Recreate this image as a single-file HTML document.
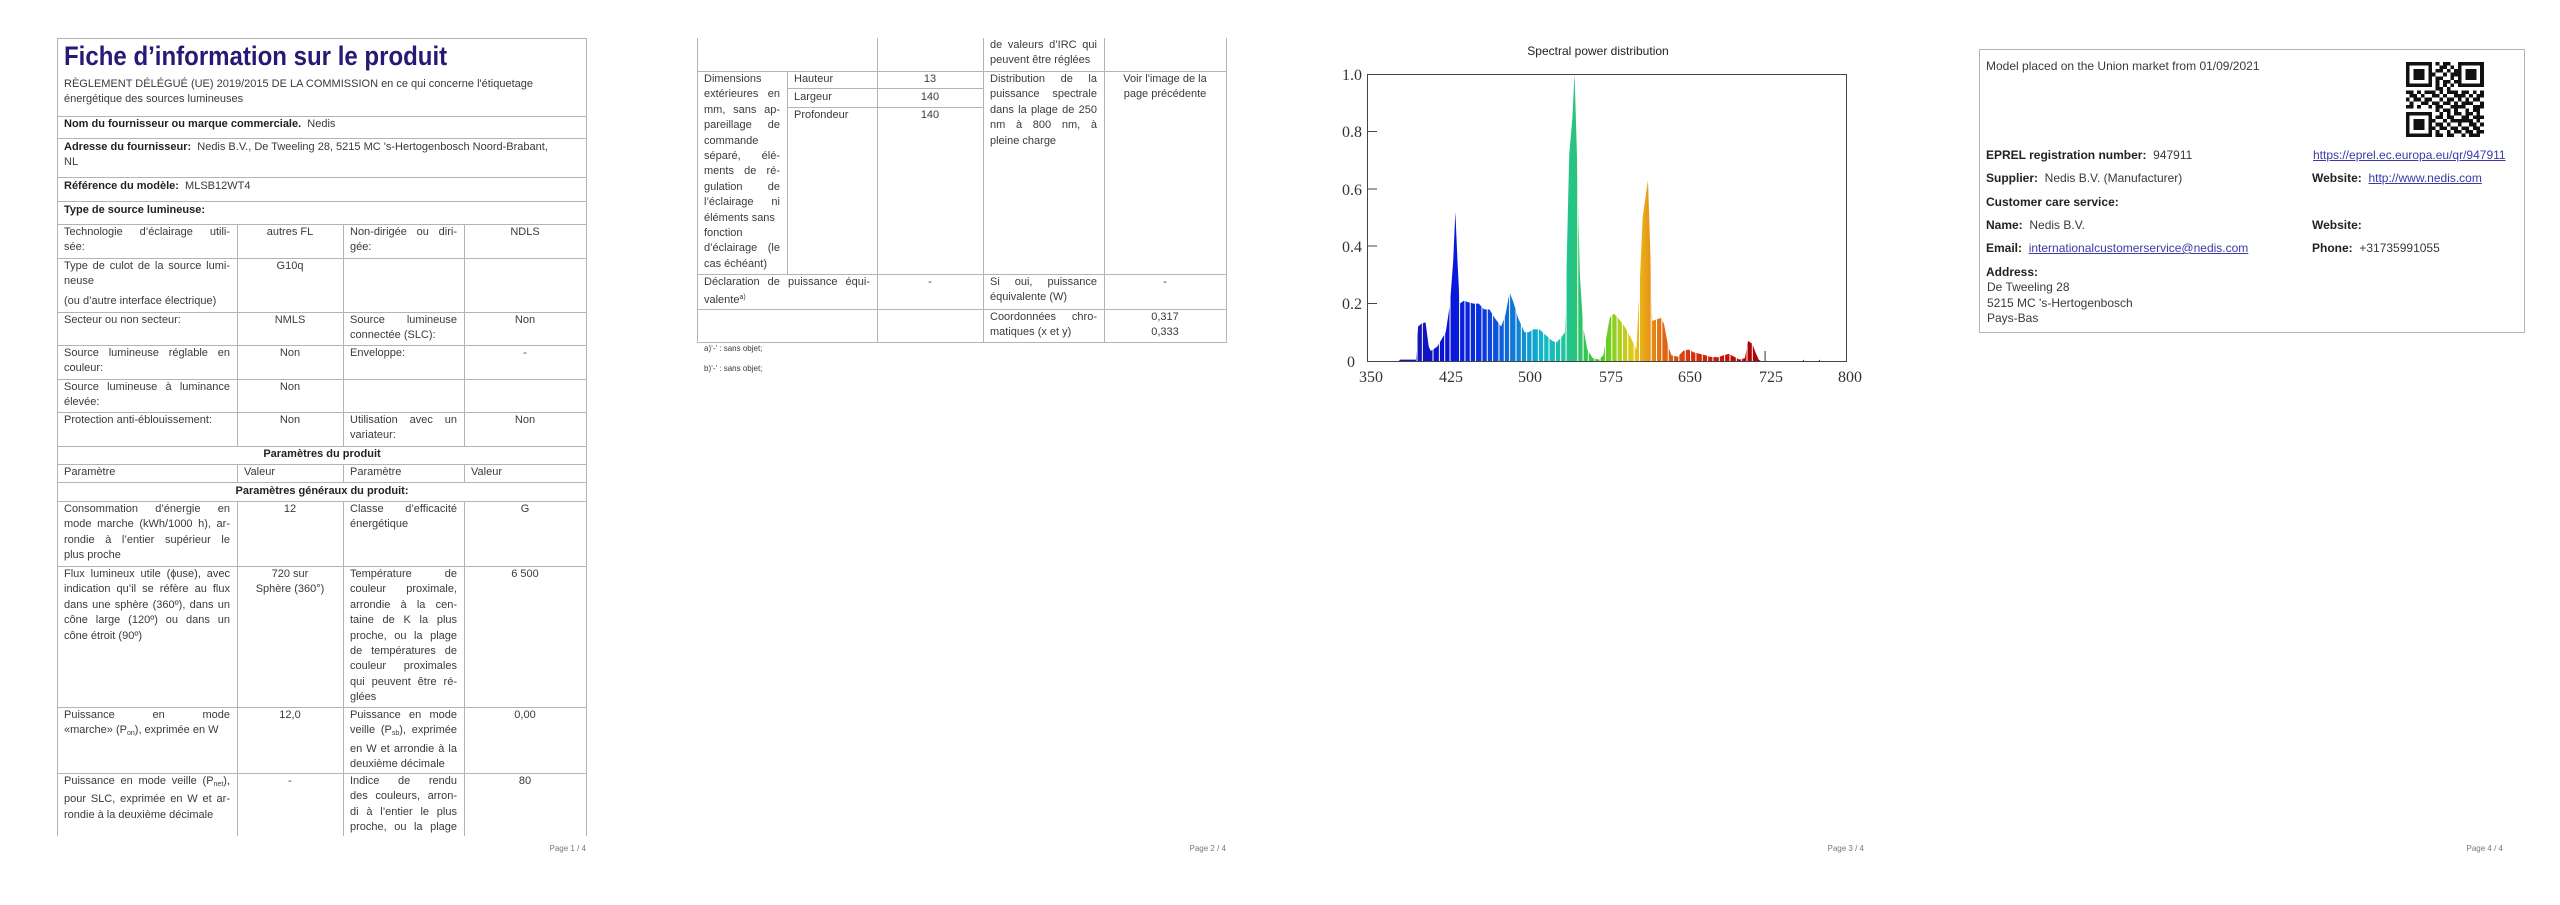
<!DOCTYPE html>
<html><head><meta charset="utf-8">
<style>
*{margin:0;padding:0;box-sizing:border-box}
body{width:2560px;height:905px;background:#fff;position:relative;overflow:hidden;font-family:"Liberation Sans",Arial,sans-serif;color:#3a3a3a}
.h{position:absolute;height:1px;background:#b4b4b4}
.v{position:absolute;width:1px;background:#b4b4b4}
.t{position:absolute;font-size:11px;line-height:15.4px;white-space:nowrap}
.c{position:absolute;font-size:11px;line-height:15.4px;white-space:nowrap}
.c div{white-space:nowrap}
.j{text-align:justify;text-align-last:justify}
.ctr{text-align:center}
b{color:#222}
.pg{position:absolute;font-size:8px;color:#777;top:844px;text-align:right;width:80px}
a{color:#3a3aa8;text-decoration:underline}
sub{font-size:7px;vertical-align:-2px}
sup{font-size:7px;vertical-align:4px}
</style></head><body>

<!-- PAGE 1 -->
<div class="h" style="left:57px;top:38px;width:530px"></div>
<div class="v" style="left:57px;top:38px;height:798px"></div>
<div class="v" style="left:586px;top:38px;height:798px"></div>
<div class="t" style="left:64px;top:40px;font-size:27px;line-height:32px;font-weight:bold;color:#2a1875;transform:scaleX(0.89);transform-origin:left">Fiche d’information sur le produit</div>
<div class="t" style="left:64px;top:77px">RÈGLEMENT DÉLÉGUÉ (UE) 2019/2015 DE LA COMMISSION en ce qui concerne l'étiquetage<br>énergétique des sources lumineuses</div>
<div class="h" style="left:57px;top:116px;width:530px"></div>
<div class="t" style="left:64px;top:117px"><b>Nom du fournisseur ou marque commerciale.</b>&nbsp; Nedis</div>
<div class="h" style="left:57px;top:138px;width:530px"></div>
<div class="t" style="left:64px;top:140px"><b>Adresse du fournisseur:</b>&nbsp; Nedis B.V., De Tweeling 28, 5215 MC 's-Hertogenbosch Noord-Brabant,<br>NL</div>
<div class="h" style="left:57px;top:177px;width:530px"></div>
<div class="t" style="left:64px;top:179px"><b>Référence du modèle:</b>&nbsp; MLSB12WT4</div>
<div class="h" style="left:57px;top:201px;width:530px"></div>
<div class="t" style="left:64px;top:203px"><b>Type de source lumineuse:</b></div>
<div class="h" style="left:57px;top:224px;width:530px"></div>
<div class="h" style="left:57px;top:258px;width:530px"></div>
<div class="h" style="left:57px;top:312px;width:530px"></div>
<div class="h" style="left:57px;top:345px;width:530px"></div>
<div class="h" style="left:57px;top:379px;width:530px"></div>
<div class="h" style="left:57px;top:412px;width:530px"></div>
<div class="h" style="left:57px;top:446px;width:530px"></div>
<div class="h" style="left:57px;top:464px;width:530px"></div>
<div class="h" style="left:57px;top:482px;width:530px"></div>
<div class="h" style="left:57px;top:501px;width:530px"></div>
<div class="h" style="left:57px;top:566px;width:530px"></div>
<div class="h" style="left:57px;top:707px;width:530px"></div>
<div class="h" style="left:57px;top:773px;width:530px"></div>
<div class="v" style="left:237px;top:224px;height:222px"></div>
<div class="v" style="left:343px;top:224px;height:222px"></div>
<div class="v" style="left:464px;top:224px;height:222px"></div>
<div class="v" style="left:237px;top:464px;height:18px"></div>
<div class="v" style="left:343px;top:464px;height:18px"></div>
<div class="v" style="left:464px;top:464px;height:18px"></div>
<div class="v" style="left:237px;top:501px;height:335px"></div>
<div class="v" style="left:343px;top:501px;height:335px"></div>
<div class="v" style="left:464px;top:501px;height:335px"></div>

<div class="c" style="left:64px;top:225px;width:166px"><div class="j">Technologie d’éclairage utili-</div><div>sée:</div></div>
<div class="c ctr" style="left:237px;top:225px;width:106px">autres FL</div>
<div class="c" style="left:350px;top:225px;width:107px"><div class="j">Non-dirigée ou diri-</div><div>gée:</div></div>
<div class="c ctr" style="left:464px;top:225px;width:122px">NDLS</div>

<div class="c" style="left:64px;top:259px;width:166px"><div class="j">Type de culot de la source lumi-</div><div>neuse</div><div style="margin-top:4px">(ou d’autre interface électrique)</div></div>
<div class="c ctr" style="left:237px;top:259px;width:106px">G10q</div>

<div class="c" style="left:64px;top:313px;width:166px">Secteur ou non secteur:</div>
<div class="c ctr" style="left:237px;top:313px;width:106px">NMLS</div>
<div class="c" style="left:350px;top:313px;width:107px"><div class="j">Source lumineuse</div><div>connectée (SLC):</div></div>
<div class="c ctr" style="left:464px;top:313px;width:122px">Non</div>

<div class="c" style="left:64px;top:346px;width:166px"><div class="j">Source lumineuse réglable en</div><div>couleur:</div></div>
<div class="c ctr" style="left:237px;top:346px;width:106px">Non</div>
<div class="c" style="left:350px;top:346px;width:107px">Enveloppe:</div>
<div class="c ctr" style="left:464px;top:346px;width:122px">-</div>

<div class="c" style="left:64px;top:380px;width:166px"><div class="j">Source lumineuse à luminance</div><div>élevée:</div></div>
<div class="c ctr" style="left:237px;top:380px;width:106px">Non</div>

<div class="c" style="left:64px;top:413px;width:166px">Protection anti-éblouissement:</div>
<div class="c ctr" style="left:237px;top:413px;width:106px">Non</div>
<div class="c" style="left:350px;top:413px;width:107px"><div class="j">Utilisation avec un</div><div>variateur:</div></div>
<div class="c ctr" style="left:464px;top:413px;width:122px">Non</div>

<div class="c ctr" style="left:57px;top:447px;width:530px"><b>Paramètres du produit</b></div>
<div class="c" style="left:64px;top:465px">Paramètre</div>
<div class="c" style="left:244px;top:465px">Valeur</div>
<div class="c" style="left:350px;top:465px">Paramètre</div>
<div class="c" style="left:471px;top:465px">Valeur</div>
<div class="c ctr" style="left:57px;top:484px;width:530px"><b>Paramètres généraux du produit:</b></div>

<div class="c" style="left:64px;top:502px;width:166px"><div class="j">Consommation d’énergie en</div><div class="j">mode marche (kWh/1000 h), ar-</div><div class="j">rondie à l’entier supérieur le</div><div>plus proche</div></div>
<div class="c ctr" style="left:237px;top:502px;width:106px">12</div>
<div class="c" style="left:350px;top:502px;width:107px"><div class="j">Classe d’efficacité</div><div>énergétique</div></div>
<div class="c ctr" style="left:464px;top:502px;width:122px">G</div>

<div class="c" style="left:64px;top:567px;width:166px"><div class="j">Flux lumineux utile (ϕuse), avec</div><div class="j">indication qu’il se réfère au flux</div><div class="j">dans une sphère (360º), dans un</div><div class="j">cône large (120º) ou dans un</div><div>cône étroit (90º)</div></div>
<div class="c ctr" style="left:237px;top:567px;width:106px">720 sur<br>Sphère (360°)</div>
<div class="c" style="left:350px;top:567px;width:107px"><div class="j">Température de</div><div class="j">couleur proximale,</div><div class="j">arrondie à la cen-</div><div class="j">taine de K la plus</div><div class="j">proche, ou la plage</div><div class="j">de températures de</div><div class="j">couleur proximales</div><div class="j">qui peuvent être ré-</div><div>glées</div></div>
<div class="c ctr" style="left:464px;top:567px;width:122px">6 500</div>

<div class="c" style="left:64px;top:708px;width:166px"><div class="j">Puissance en mode</div><div>«marche» (P<sub>on</sub>), exprimée en W</div></div>
<div class="c ctr" style="left:237px;top:708px;width:106px">12,0</div>
<div class="c" style="left:350px;top:708px;width:107px"><div class="j">Puissance en mode</div><div class="j">veille (P<sub>sb</sub>), exprimée</div><div class="j">en W et arrondie à la</div><div>deuxième décimale</div></div>
<div class="c ctr" style="left:464px;top:708px;width:122px">0,00</div>

<div class="c" style="left:64px;top:774px;width:166px"><div class="j">Puissance en mode veille (P<sub>net</sub>),</div><div class="j">pour SLC, exprimée en W et ar-</div><div>rondie à la deuxième décimale</div></div>
<div class="c ctr" style="left:237px;top:774px;width:106px">-</div>
<div class="c" style="left:350px;top:774px;width:107px"><div class="j">Indice de rendu</div><div class="j">des couleurs, arron-</div><div class="j">di à l’entier le plus</div><div class="j">proche, ou la plage</div></div>
<div class="c ctr" style="left:464px;top:774px;width:122px">80</div>
<div style="position:absolute;left:0;top:836px;width:640px;height:8px;background:#fff"></div>
<div class="pg" style="left:506px">Page 1 / 4</div>

<!-- PAGE 2 -->
<div class="v" style="left:697px;top:38px;height:305px"></div>
<div class="v" style="left:1226px;top:38px;height:305px"></div>
<div class="v" style="left:787px;top:71px;height:203px"></div>
<div class="v" style="left:877px;top:38px;height:305px"></div>
<div class="v" style="left:983px;top:38px;height:305px"></div>
<div class="v" style="left:1104px;top:38px;height:305px"></div>
<div class="h" style="left:697px;top:71px;width:530px"></div>
<div class="h" style="left:787px;top:88px;width:196px"></div>
<div class="h" style="left:787px;top:107px;width:196px"></div>
<div class="h" style="left:697px;top:274px;width:530px"></div>
<div class="h" style="left:697px;top:309px;width:530px"></div>
<div class="h" style="left:697px;top:342px;width:530px"></div>
<div class="c" style="left:990px;top:38px;width:107px"><div class="j">de valeurs d’IRC qui</div><div>peuvent être réglées</div></div>
<div class="c" style="left:704px;top:72px;width:76px"><div>Dimensions</div><div class="j">extérieures en</div><div class="j">mm, sans ap-</div><div class="j">pareillage de</div><div>commande</div><div class="j">séparé, élé-</div><div class="j">ments de ré-</div><div class="j">gulation de</div><div class="j">l’éclairage ni</div><div>éléments sans</div><div>fonction</div><div class="j">d’éclairage (le</div><div>cas échéant)</div></div>
<div class="c" style="left:794px;top:72px">Hauteur</div>
<div class="c" style="left:794px;top:90px">Largeur</div>
<div class="c" style="left:794px;top:108px">Profondeur</div>
<div class="c ctr" style="left:877px;top:72px;width:106px">13</div>
<div class="c ctr" style="left:877px;top:90px;width:106px">140</div>
<div class="c ctr" style="left:877px;top:108px;width:106px">140</div>
<div class="c" style="left:990px;top:72px;width:107px"><div class="j">Distribution de la</div><div class="j">puissance spectrale</div><div class="j">dans la plage de 250</div><div class="j">nm à 800 nm, à</div><div>pleine charge</div></div>
<div class="c ctr" style="left:1104px;top:72px;width:122px">Voir l'image de la<br>page précédente</div>
<div class="c" style="left:704px;top:275px;width:166px"><div class="j">Déclaration de puissance équi-</div><div>valente<sup>a)</sup></div></div>
<div class="c ctr" style="left:877px;top:275px;width:106px">-</div>
<div class="c" style="left:990px;top:275px;width:107px"><div class="j">Si oui, puissance</div><div>équivalente (W)</div></div>
<div class="c ctr" style="left:1104px;top:275px;width:122px">-</div>
<div class="c" style="left:990px;top:310px;width:107px"><div class="j">Coordonnées chro-</div><div>matiques (x et y)</div></div>
<div class="c ctr" style="left:1104px;top:310px;width:122px">0,317<br>0,333</div>
<div class="t" style="left:704px;top:344px;font-size:8px;line-height:10px">a)‘-’ : sans objet;</div>
<div class="t" style="left:704px;top:364px;font-size:8px;line-height:10px">b)‘-’ : sans objet;</div>
<div class="pg" style="left:1146px">Page 2 / 4</div>

<!-- PAGE 3 chart -->
<svg style="position:absolute;left:0;top:0" width="2560" height="905">
<defs>
<linearGradient id="sp" gradientUnits="userSpaceOnUse" x1="380" y1="0" x2="725" y2="0">
<stop offset="0" stop-color="#1a1aa0"/>
<stop offset="0.13" stop-color="#0a10d8"/>
<stop offset="0.22" stop-color="#0a30e0"/>
<stop offset="0.30" stop-color="#1070d8"/>
<stop offset="0.39" stop-color="#10b8cc"/>
<stop offset="0.45" stop-color="#20c4a0"/>
<stop offset="0.50" stop-color="#30c460"/>
<stop offset="0.55" stop-color="#40cc20"/>
<stop offset="0.60" stop-color="#a8d020"/>
<stop offset="0.64" stop-color="#e8c818"/>
<stop offset="0.68" stop-color="#e89818"/>
<stop offset="0.72" stop-color="#e06810"/>
<stop offset="0.80" stop-color="#d83010"/>
<stop offset="0.90" stop-color="#c01008"/>
<stop offset="1" stop-color="#a00000"/>
</linearGradient>
</defs>
<text x="1598" y="55" font-family="Liberation Sans, Arial, sans-serif" font-size="12" fill="#222" text-anchor="middle">Spectral power distribution</text>
<g transform="translate(1367,361) scale(1.0644,-287) translate(-350,0)">
<polygon fill="url(#sp)" points="380,0 381,0.005 396,0.005 398,0.12 401,0.13 405,0.135 408,0.05 410,0.035 416,0.05 424,0.1 428,0.2 431,0.35 433,0.52 435,0.35 437,0.2 441,0.21 445,0.205 450,0.2 455,0.2 460,0.18 465,0.18 470,0.15 476,0.12 480,0.16 484,0.24 488,0.2 492,0.15 498,0.1 502,0.1 506,0.11 512,0.11 518,0.09 524,0.07 528,0.065 532,0.08 536,0.1 540,0.72 543,0.85 545,1.0 547,0.75 550,0.3 553,0.12 557,0.04 562,0.01 568,0.005 572,0.02 578,0.15 582,0.165 586,0.15 592,0.12 598,0.08 603,0.04 606,0.25 609,0.5 612,0.58 614,0.63 616,0.4 618,0.14 622,0.145 626,0.15 629,0.13 633,0.05 636,0.02 642,0.015 647,0.035 652,0.04 657,0.03 663,0.025 668,0.02 672,0.015 680,0.013 685,0.02 690,0.025 695,0.015 700,0.005 705,0.01 708,0.07 712,0.06 715,0.03 718,0.005 720,0"/>
<g stroke="#fff" stroke-width="1">
<path vector-effect="non-scaling-stroke" d="M397,0V1M402,0V1M412,0V1M418,0V1M423,0V1M428,0V1M437,0V1M442,0V1M447,0V1M452,0V1M458,0V1M463,0V1M468,0V1M474,0V1M479,0V1M484,0V1M490,0V1M495,0V1M500,0V1M505,0V1M511,0V1M516,0V1M521,0V1M527,0V1M532,0V1M537,0V1M548,0V1M553,0V1M558,0V1M564,0V1M569,0V1M574,0V1M580,0V1M585,0V1M590,0V1M595,0V1M601,0V1M606,0V1M617,0V1M622,0V1M627,0V1M633,0V1M638,0V1M643,0V1M649,0V1M654,0V1M659,0V1M665,0V1M670,0V1M675,0V1M681,0V1M686,0V1M691,0V1M697,0V1M702,0V1M707,0V1M712,0V1"/>
</g>
<path vector-effect="non-scaling-stroke" stroke="#333" stroke-width="1" d="M724,0V0.035M760,0V0.004M775,0V0.004"/>
</g>
<rect x="1367.5" y="74.5" width="479" height="287" fill="none" stroke="#444" stroke-width="1"/>
<path stroke="#444" d="M1367,131.5h10M1367,189h10M1367,246h10M1367,303.5h10"/>
<g font-family="Liberation Serif, serif" font-size="16" fill="#333" text-anchor="end">
<text x="1362" y="80">1.0</text><text x="1362" y="137">0.8</text><text x="1362" y="195">0.6</text><text x="1362" y="252">0.4</text><text x="1362" y="309">0.2</text><text x="1355" y="367">0</text>
</g>
<g font-family="Liberation Serif, serif" font-size="16" fill="#333" text-anchor="middle">
<text x="1371" y="382">350</text><text x="1451" y="382">425</text><text x="1530" y="382">500</text><text x="1611" y="382">575</text><text x="1690" y="382">650</text><text x="1771" y="382">725</text><text x="1850" y="382">800</text>
</g>
<!-- QR -->
<g transform="translate(2406,62) scale(3.71,3.57)" fill="none" stroke="#111" stroke-width="1" shape-rendering="crispEdges">
<path d="M0,0.5h7m1,0h1m1,0h2m2,0h7
M0,1.5h1m5,0h1m2,0h2m1,0h1m1,0h1m5,0h1
M0,2.5h1m1,0h3m1,0h1m1,0h2m1,0h1m1,0h2m1,0h3m1,0h1
M0,3.5h1m1,0h3m1,0h2m2,0h1m1,0h3m1,0h3m1,0h1
M0,4.5h1m1,0h3m1,0h1m1,0h2m2,0h1m1,0h1m1,0h3m1,0h1
M0,5.5h1m5,0h1m1,0h1m1,0h2m1,0h2m5,0h1
M0,6.5h7m1,0h1m1,0h1m1,0h1m1,0h7
M8,7.5h2m1,0h1
M0,8.5h2m1,0h1m1,0h3m1,0h1m1,0h3m1,0h2m1,0h1m1,0h1
M1,9.5h2m1,0h1m2,0h2m1,0h1m2,0h3m1,0h1m1,0h2
M0,10.5h1m1,0h2m1,0h2m2,0h1m1,0h2m1,0h1m1,0h1m1,0h2
M1,11.5h1m2,0h2m1,0h2m1,0h2m1,0h1m1,0h3m2,0h1
M0,12.5h2m1,0h1m2,0h1m1,0h2m2,0h4m2,0h3
M8,13.5h1m1,0h2m1,0h1m2,0h1m1,0h2
M0,14.5h7m2,0h1m1,0h1m1,0h2m1,0h2m1,0h1
M0,15.5h1m5,0h1m1,0h2m1,0h2m2,0h2m1,0h3
M0,16.5h1m1,0h3m1,0h2m2,0h1m1,0h6m1,0h1
M0,17.5h1m1,0h3m1,0h1m1,0h2m1,0h1m2,0h1m2,0h2m1,0h1
M0,18.5h1m1,0h3m1,0h2m1,0h2m1,0h2m1,0h2m1,0h2
M0,19.5h1m5,0h1m1,0h1m2,0h1m1,0h2m1,0h2m1,0h2
M0,20.5h7m1,0h2m1,0h2m2,0h1m1,0h3"/>
</g>
</svg>
<div class="pg" style="left:1784px">Page 3 / 4</div>

<!-- PAGE 4 -->
<div style="position:absolute;left:1979px;top:49px;width:546px;height:284px;border:1px solid #b4b4b4"></div>
<div class="t" style="left:1986px;top:59px;font-size:12px">Model placed on the Union market from 01/09/2021</div>
<div class="t" style="left:1986px;top:148px;font-size:12px"><b>EPREL registration number:</b>&nbsp; 947911</div>
<div class="t" style="left:2313px;top:148px;font-size:12px"><a>https://eprel.ec.europa.eu/qr/947911</a></div>
<div class="t" style="left:1986px;top:171px;font-size:12px"><b>Supplier:</b>&nbsp; Nedis B.V. (Manufacturer)</div>
<div class="t" style="left:2312px;top:171px;font-size:12px"><b>Website:</b>&nbsp; <a>http://www.nedis.com</a></div>
<div class="t" style="left:1986px;top:195px;font-size:12px"><b>Customer care service:</b></div>
<div class="t" style="left:1986px;top:218px;font-size:12px"><b>Name:</b>&nbsp; Nedis B.V.</div>
<div class="t" style="left:2312px;top:218px;font-size:12px"><b>Website:</b></div>
<div class="t" style="left:1986px;top:241px;font-size:12px"><b>Email:</b>&nbsp; <a>internationalcustomerservice@nedis.com</a></div>
<div class="t" style="left:2312px;top:241px;font-size:12px"><b>Phone:</b>&nbsp; +31735991055</div>
<div class="t" style="left:1986px;top:265px;font-size:12px"><b>Address:</b></div>
<div class="t" style="left:1987px;top:280px;font-size:12px;line-height:15.5px">De Tweeling 28<br>5215 MC 's-Hertogenbosch<br>Pays-Bas</div>
<div class="pg" style="left:2423px">Page 4 / 4</div>
</body></html>
